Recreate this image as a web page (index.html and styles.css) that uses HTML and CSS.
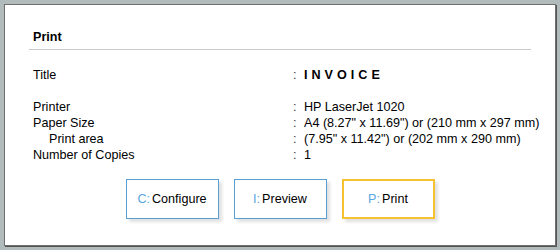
FILE: index.html
```html
<!DOCTYPE html>
<html>
<head>
<meta charset="utf-8">
<title>Print</title>
<link rel="stylesheet" href="styles.css">
</head>
<body>
<div class="window">
  <h1 class="heading">Print</h1>

  <div class="info">
    <div class="label">Title</div><div class="colon">:</div><div class="value title">INVOICE</div>
    <div class="blank"></div>
    <div class="label">Printer</div><div class="colon">:</div><div class="value">HP LaserJet 1020</div>
    <div class="label">Paper Size</div><div class="colon">:</div><div class="value">A4 (8.27" x 11.69") or (210 mm x 297 mm)</div>
    <div class="label sub">Print area</div><div class="colon">:</div><div class="value">(7.95" x 11.42") or (202 mm x 290 mm)</div>
    <div class="label">Number of Copies</div><div class="colon">:</div><div class="value">1</div>
  </div>

  <div class="buttons">
    <button class="btn"><span class="key">C:</span>Configure</button>
    <button class="btn"><span class="key">I:</span>Preview</button>
    <button class="btn active"><span class="key">P:</span>Print</button>
  </div>
</div>
</body>
</html>
```

FILE: styles.css
```css
html, body {
   margin: 0;
   padding: 0;
}

body {
   background-color: #b2bbbb;
   font-family: Arial, "Liberation Sans", sans-serif;
   font-size: 12.6px;
   color: #000;
   padding: 4px;
   width: 552px;
   height: 242px;
}

.window {
   box-sizing: border-box;
   width: 552px;
   height: 242px;
   background: #fff;
   border: 1px solid #6f6f6f;
   box-shadow: 1px 1px 0 #555;
   padding: 24px 24px 0 24px;
}

.heading {
   margin: 0;
   font-size: 12.6px;
   line-height: 16px;
   font-weight: bold;
   padding: 0 4px 4px 4px;
   border-bottom: 1px solid #cacaca;
}

.info {
   display: grid;
   grid-template-columns: 260px 11px 1fr;
   line-height: 16px;
   margin-top: 17px;
   padding-left: 4px;
   white-space: nowrap;
}

.blank {
   grid-column: 1 / 4;
   height: 16px;
}

.label.sub {
   padding-left: 16px;
}

.colon {
   color: #333;
}

.title {
   font-weight: bold;
   letter-spacing: 4px;
}

.buttons {
   display: flex;
   justify-content: center;
   gap: 15px;
   margin-top: 16px;
}

.btn {
   box-sizing: border-box;
   width: 93px;
   height: 40px;
   background: #fff;
   border: 1px solid #5a9fd4;
   box-shadow: 3px 3px 3px rgba(0, 0, 0, 0.12);
   font-family: Arial, "Liberation Sans", sans-serif;
   font-size: 12.6px;
   color: #000;
   padding: 0;
}

.btn.active {
   border: 2px solid #f7c232;
}

.key {
   color: #5aa6e2;
   margin-right: 2px;
}
```
